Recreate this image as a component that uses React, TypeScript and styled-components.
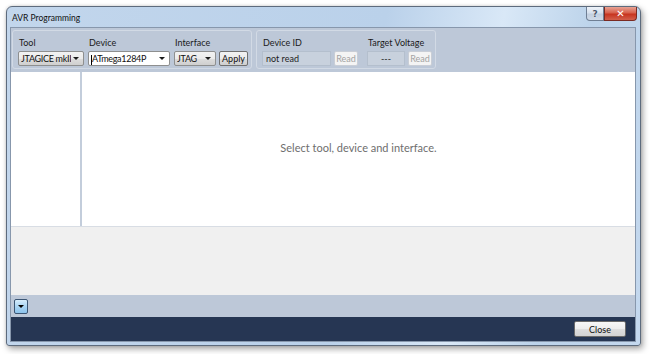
import React from 'react';
import styled, { createGlobalStyle } from 'styled-components';

const GlobalStyle = createGlobalStyle`
  html, body {
    margin: 0;
    padding: 0;
    background: #ffffff;
  }
  body {
    font-family: Lato, 'Open Sans', sans-serif;
    font-size: 9px;
    color: #1e1e1e;
  }
`;

const Page = styled.div`
  width: 650px;
  height: 354px;
  padding: 6px 0 0 6px;
  box-sizing: border-box;
`;

const Window = styled.div`
  width: 635px;
  height: 340px;
  box-sizing: border-box;
  border: 1px solid #5d6b7d;
  border-radius: 6px 6px 3px 3px;
  background: linear-gradient(100deg, #c2d6ec 0%, #bad1ea 55%, #d9e8f7 72%, #bcd3ea 85%, #c4d8ee 100%);
  box-shadow: 2px 3px 6px rgba(0, 0, 0, 0.35), 0 0 3px rgba(0, 0, 0, 0.15);
  padding: 0 4px 3px 3px;
  display: flex;
  flex-direction: column;
`;

const TitleBar = styled.div`
  height: 20px;
  display: flex;
  align-items: flex-start;
  justify-content: space-between;
`;

const Title = styled.span`
  font-size: 8.5px;
  color: #101010;
  padding: 5px 0 0 2px;
  line-height: 12px;
`;

const Captions = styled.div`
  display: flex;
  margin-right: -1px;
`;

const CaptionButton = styled.div<{ $close?: boolean }>`
  width: ${(p) => (p.$close ? '33px' : '18px')};
  height: 14px;
  box-sizing: border-box;
  border: 1px solid ${(p) => (p.$close ? '#7a2a22' : '#6f7f94')};
  border-top: none;
  border-radius: ${(p) => (p.$close ? '0 0 4px 0' : '0 0 0 4px')};
  background: ${(p) =>
    p.$close
      ? 'linear-gradient(#e8a394 0%, #d7604c 45%, #c7341f 55%, #d2604c 100%)'
      : 'linear-gradient(#eef3f9 0%, #d7e1ee 45%, #c3d0e0 55%, #d0dbe9 100%)'};
  color: #ffffff;
  display: flex;
  align-items: center;
  justify-content: center;
  font-size: 10px;
  font-weight: bold;
  font-family: 'DejaVu Sans', sans-serif;
`;

const HelpGlyph = styled.span`
  color: #4a586a;
  font-size: 9px;
  text-shadow: 0 0 1px #ffffff;
`;

const Client = styled.div`
  flex: 1;
  border: 1px solid #8797ac;
  display: flex;
  flex-direction: column;
  background: #ffffff;
`;

const Toolbar = styled.div`
  height: 44px;
  box-sizing: border-box;
  background: #bdc8d8;
  padding: 2px 0 3px 1px;
  display: flex;
  gap: 4px;
`;

const Group = styled.div`
  height: 39px;
  box-sizing: border-box;
  border: 1px solid #d2dae5;
  border-radius: 3px;
  padding: 5px 3px 0 5px;
  display: flex;
  gap: 4px;
`;

const Field = styled.div<{ $w?: number; $gapLeft?: number }>`
  display: flex;
  flex-direction: column;
  gap: 2px;
  width: ${(p) => (p.$w ? `${p.$w}px` : 'auto')};
  margin-left: ${(p) => p.$gapLeft ?? 0}px;
`;

const Label = styled.div`
  height: 13px;
  line-height: 13px;
  font-size: 9px;
  color: #1a1a1a;
  padding-left: 1px;
  white-space: nowrap;
`;

const Controls = styled.div`
  display: flex;
  gap: 3px;
`;

const Combo = styled.div<{ $w: number; $white?: boolean }>`
  width: ${(p) => p.$w}px;
  height: 15px;
  box-sizing: border-box;
  border: 1px solid #8e8f8f;
  border-radius: 2px;
  background: ${(p) => (p.$white ? '#ffffff' : 'linear-gradient(#f2f2f2 0%, #ebebeb 50%, #dddddd 51%, #cfcfcf 100%)')};
  display: flex;
  align-items: center;
  padding-left: 2px;
  font-size: 9px;
  line-height: 13px;
  color: #101010;
`;

const ComboText = styled.span`
  flex: 1;
  white-space: nowrap;
  overflow: hidden;
  letter-spacing: -0.3px;
`;

const Arrow = styled.span`
  flex-shrink: 0;
  width: 0;
  height: 0;
  border-left: 3px solid transparent;
  border-right: 3px solid transparent;
  border-top: 3px solid #1a1a1a;
  margin: 0 4px 0 2px;
`;

const Caret = styled.span`
  display: inline-block;
  width: 1px;
  height: 10px;
  background: #000;
  vertical-align: middle;
`;

const Button = styled.div<{ $w: number; $disabled?: boolean }>`
  width: ${(p) => p.$w}px;
  height: 15px;
  box-sizing: border-box;
  border: 1px solid ${(p) => (p.$disabled ? '#c9ced6' : '#707070')};
  border-radius: 2px;
  background: ${(p) =>
    p.$disabled ? '#f4f4f4' : 'linear-gradient(#f2f2f2 0%, #ebebeb 50%, #dddddd 51%, #cfcfcf 100%)'};
  color: ${(p) => (p.$disabled ? '#a3a3a3' : '#101010')};
  display: flex;
  align-items: center;
  justify-content: center;
  font-size: 9px;
`;

const ReadOnlyBox = styled.div<{ $w: number; $center?: boolean }>`
  width: ${(p) => p.$w}px;
  height: 15px;
  box-sizing: border-box;
  border: 1px solid #b4bfcd;
  background: #c8d1dd;
  display: flex;
  align-items: center;
  justify-content: ${(p) => (p.$center ? 'center' : 'flex-start')};
  padding-left: ${(p) => (p.$center ? '0' : '3px')};
  font-size: 9px;
  color: #1e1e1e;
`;

const Main = styled.div`
  height: 154px;
  display: flex;
  background: #ffffff;
`;

const SidePane = styled.div`
  width: 69px;
  border-right: 2px solid #c3cddb;
`;

const Message = styled.div`
  flex: 1;
  display: flex;
  align-items: center;
  justify-content: center;
  font-size: 11px;
  color: #6e6e6e;
  padding-bottom: 4px;
`;

const LogArea = styled.div`
  height: 69px;
  background: #f0f0f0;
  border-top: 1px solid #d8dde4;
  box-sizing: border-box;
`;

const ExpandBar = styled.div`
  height: 22px;
  background: #bdc8d8;
  display: flex;
  align-items: center;
  padding-left: 3px;
  padding-top: 1px;
  box-sizing: border-box;
`;

const ExpandButton = styled.div`
  width: 14px;
  height: 15px;
  box-sizing: border-box;
  border: 1px solid #3b5573;
  border-radius: 2px;
  background: linear-gradient(#d6ecfb 0%, #a9d4f3 50%, #8cc3ec 100%);
  display: flex;
  align-items: center;
  justify-content: center;
`;

const SmallArrow = styled.span`
  width: 0;
  height: 0;
  border-left: 3px solid transparent;
  border-right: 3px solid transparent;
  border-top: 3px solid #000;
`;

const Footer = styled.div`
  flex: 1;
  background: #263653;
  display: flex;
  justify-content: flex-end;
  align-items: flex-start;
  padding: 4px 9px 0 0;
`;

const CloseButton = styled(Button)`
  height: 16px;
  border-color: #6a6a6a;
  background: linear-gradient(#f7f7f7 0%, #ededed 50%, #dedede 51%, #d3d3d3 100%);
`;

export default function App() {
  return (
    <>
      <GlobalStyle />
      <Page>
        <Window>
          <TitleBar>
            <Title>AVR Programming</Title>
            <Captions>
              <CaptionButton>
                <HelpGlyph>?</HelpGlyph>
              </CaptionButton>
              <CaptionButton $close>✕</CaptionButton>
            </Captions>
          </TitleBar>
          <Client>
            <Toolbar>
              <Group>
                <Field>
                  <Label>Tool</Label>
                  <Combo $w={66}>
                    <ComboText>JTAGICE mkII</ComboText>
                    <Arrow />
                  </Combo>
                </Field>
                <Field>
                  <Label>Device</Label>
                  <Combo $w={82} $white>
                    <ComboText>
                      <Caret />
                      ATmega1284P
                    </ComboText>
                    <Arrow />
                  </Combo>
                </Field>
                <Field>
                  <Label>Interface</Label>
                  <Controls>
                    <Combo $w={42}>
                      <ComboText>JTAG</ComboText>
                      <Arrow />
                    </Combo>
                    <Button $w={29}>Apply</Button>
                  </Controls>
                </Field>
              </Group>
              <Group>
                <Field $w={96}>
                  <Label>Device ID</Label>
                  <Controls>
                    <ReadOnlyBox $w={69}>not read</ReadOnlyBox>
                    <Button $w={24} $disabled>
                      Read
                    </Button>
                  </Controls>
                </Field>
                <Field $w={65} $gapLeft={5}>
                  <Label>Target Voltage</Label>
                  <Controls>
                    <ReadOnlyBox $w={38} $center>
                      ---
                    </ReadOnlyBox>
                    <Button $w={24} $disabled>
                      Read
                    </Button>
                  </Controls>
                </Field>
              </Group>
            </Toolbar>
            <Main>
              <SidePane />
              <Message>Select tool, device and interface.</Message>
            </Main>
            <LogArea />
            <ExpandBar>
              <ExpandButton>
                <SmallArrow />
              </ExpandButton>
            </ExpandBar>
            <Footer>
              <CloseButton $w={52}>Close</CloseButton>
            </Footer>
          </Client>
        </Window>
      </Page>
    </>
  );
}
